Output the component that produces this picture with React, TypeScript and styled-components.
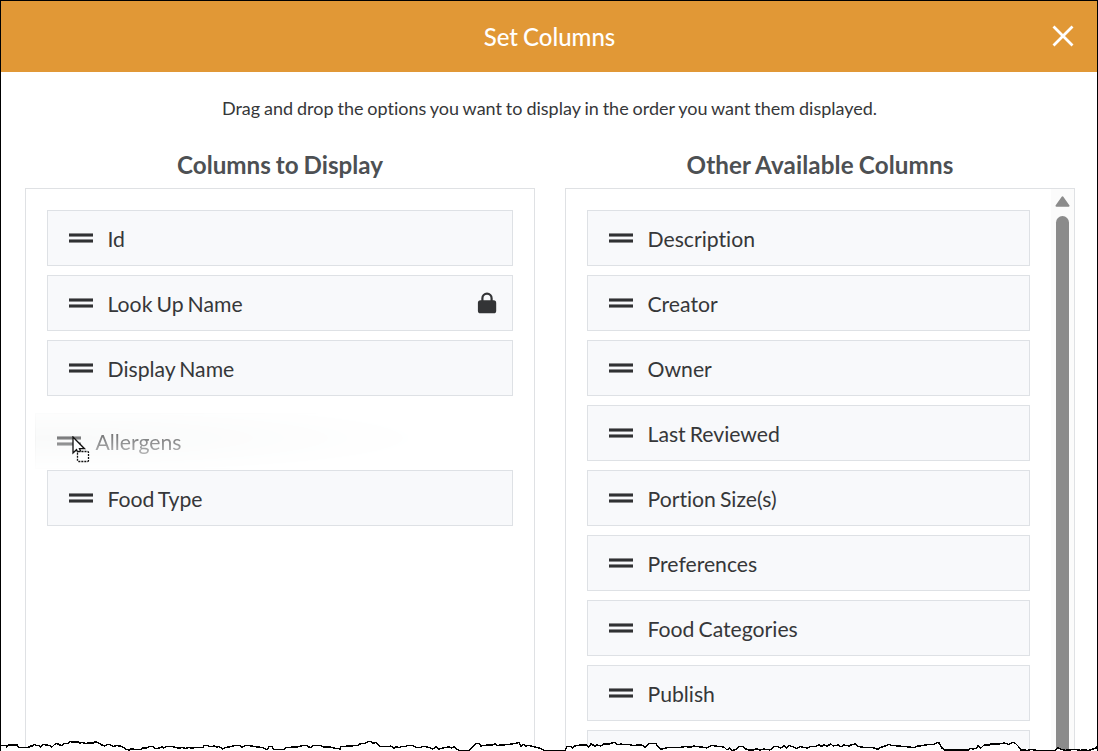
import React from 'react';
import styled, { createGlobalStyle } from 'styled-components';

const GlobalStyle = createGlobalStyle`
  *, *::before, *::after { box-sizing: border-box; }
  body { margin: 0; background: #fff; overflow: hidden; }
`;

const Dialog = styled.div`
  position: relative;
  display: flex;
  flex-direction: column;
  width: 1098px;
  height: 751px;
  overflow: hidden;
  border: 1px solid #000;
  border-bottom: 0;
  background: #fff;
  color: #363739;
  font-family: Lato, sans-serif;
  font-variant-ligatures: none;
`;

const Header = styled.header`
  display: grid;
  grid-template-columns: 68px 1fr 68px;
  align-items: center;
  flex: none;
  height: 71px;
  padding-bottom: 2px;
  background: #e19836;
  color: #fff;
`;

const Title = styled.h1`
  grid-column: 2;
  margin: 0;
  padding: 2px 0 0 1px;
  text-align: center;
  font-size: 24px;
  font-weight: 500;
  line-height: 30px;
  word-spacing: -1px;
`;

const CloseButton = styled.button`
  display: flex;
  justify-content: center;
  padding: 0;
  border: 0;
  background: none;
`;

const Hint = styled.p`
  flex: none;
  margin: 23px 0 0;
  padding-left: 1px;
  text-align: center;
  font-size: 18px;
  line-height: 26px;
  word-spacing: -0.7px;
`;

const Columns = styled.div`
  display: grid;
  grid-template-columns: 510px 510px;
  gap: 30px;
  flex: 1;
  min-height: 0;
  padding: 28px 0 0 24px;
`;

const Column = styled.section`
  display: flex;
  flex-direction: column;
  min-height: 0;
`;

const ColumnTitle = styled.h2<{ $tracking?: string }>`
  flex: none;
  margin: 0;
  height: 39px;
  text-align: center;
  color: #4d5053;
  font-size: 24.2px;
  font-weight: 700;
  line-height: 31px;
  word-spacing: -0.9px;
  letter-spacing: ${({ $tracking }) => $tracking ?? 'normal'};
`;

const Panel = styled.div`
  display: flex;
  flex: 1;
  min-height: 0;
  overflow: hidden;
  border: 1px solid #dfe1e4;
  border-bottom: 0;
`;

const List = styled.ul`
  display: flex;
  flex-direction: column;
  gap: 9px;
  flex: 1;
  margin: 0;
  padding: 21px 21px 0;
  list-style: none;
`;

const Item = styled.li`
  display: flex;
  align-items: center;
  flex: none;
  height: 56px;
  padding: 0 15px 0 21px;
  border: 1px solid #dee1e5;
  background: #f8f9fb;
`;

const Label = styled.span`
  flex: 1;
  margin-left: 14.5px;
  padding-top: 2px;
  font-size: 21.2px;
  line-height: 28px;
  word-spacing: -1.4px;
  white-space: nowrap;
`;

const Grip = styled.span`
  flex: none;
  width: 24px;
  height: 10px;
  background: linear-gradient(
    to bottom,
    #8a8a8c 0 1px, #303133 1px 3px, #8a8a8c 3px 4px,
    transparent 4px 6px,
    #8a8a8c 6px 7px, #303133 7px 9px, #8a8a8c 9px 10px
  );
`;

const DropSlot = styled.li`
  position: relative;
  flex: none;
  height: 56px;
`;

const DragGhost = styled.div`
  position: absolute;
  left: -12px;
  top: 8px;
  display: flex;
  align-items: center;
  width: 466px;
  height: 56px;
`;

const GhostFill = styled(DragGhost)`
  border: 1px solid #f3f4f4;
  background: #f9fafa;
  mask-image: radial-gradient(ellipse 375px 36px at 30px 25px, #000 0%, rgba(0, 0, 0, 0.6) 40%, rgba(0, 0, 0, 0.25) 75%, transparent 100%);
`;

const GhostContent = styled(DragGhost)`
  padding: 0 22px;
  opacity: 0.75;
  mask-image: linear-gradient(to bottom, #000 30%, rgba(0, 0, 0, 0.4) 80%);
`;

const Cursor = styled.svg`
  position: absolute;
  left: 25px;
  top: 31px;
`;

const Scrollbar = styled.div`
  display: flex;
  flex-direction: column;
  align-items: center;
  flex: none;
  width: 23px;
  padding-top: 7px;
  background: #fbfbfb;
`;

const Thumb = styled.div`
  flex: 1;
  width: 13px;
  margin-top: 9px;
  border-radius: 7px 7px 0 0;
  background: #8b8b8b;
`;

const TornEdge = styled.svg`
  position: absolute;
  left: -1px;
  bottom: 0;
`;

const EDGE =
  '0,15.5 6,15.5 7,17 9,14.8 17,14.8 19,17.5 28,17.5 31,16 33,16 34,14.5 37,15.5 39,15.5 41,17 43,14.5 50,15.5 52,17 55,14 57,13.5 60,15 62,15.7 64,13.7 68,13.7 70,11.8 78,12 80,13 82,12.3 85,13.3 93,13 96,11.5 99,13.3 102,15 105,16 107,14.4 110,14.4 113,16.3 117,15.7 120,16 123,17.4 127,19.6 129,20 131,19 137,19.4 140,19.6 143,18 147,18 149,16.7 153,16.7 155,18.4 158,18.4 162,17 164,18 166,16.4 173,16.7 178,18 183,17.7 186,18.4 188,17.7 193,18 197,17.4 203,17.4 204,15.4 208,15.4 210,16.7 213,16.7 214,16 217,17.4 218,16.4 223,19 225,17.7 230,16.7 235,15.4 239,15.4 242,17 246,15.4 250,15.7 255,16.7 262,17.4 267,19.6 269,16.7 272,16.7 274,19.4 284,19.4 286,17.4 297,17 302,15.7 307,15.4 309,17 311,17.4 313,15.4 321,15.4 323,17 330,17 334,18 340,19 341,16.4 351,16 358,15.4 360,14 366,13 368,11.5 371,11.5 373,13 376,12.7 379,16 382,16.7 389,16.7 391,16 394,18.4 396,17 400,17.5 402,16.4 406,16.4 408,15.4 412,15.4 416,17.4 420,17.4 424,16.4 429,17.4 433,19 436,17 439,19 443,18 447,17.4 449,16.7 452,18 454,16.4 456,18.4 459,20.3 469,20.3 473,17 476,13.4 479,13.4 481,16 484,15.4 488,15 493,15 495,13.7 497,15.4 501,15 507,14.7 511,14 516,13.4 519,12.4 521,16 524,14.4 526,16 529,15.4 534,16.7 539,18 544,20.3 565,20.3 567,16.7 571,16.7 573,18 575,16 580,15 587,15 589,17 591,14 595,16 597,15 601,16 604,14 609,14 612,13 615,12.5 617,14.7 621,14 625,14.7 629,14.4 633,15.7 637,15 642,15 645,17.4 649,13.4 656,13.4 658,17 661,19.4 664,18.4 669,17.4 680,17.4 685,16.7 691,17 694,16 698,16.7 702,17 707,18 711,15.4 718,16.4 724,17 727,20 730,18 732,20.3 735,20 739,16.7 743,16.7 746,19 749,20 753,20 756,18.7 760,20 764,19 770,20 774,16.4 778,16.7 781,18 784,16 787,18 789,15.5 794,17 796,18.7 800,16.7 807,18 811,16.4 815,16.7 819,15 821,16.5 824,15 827,16 831,14 833,16 838,15 841,16.7 844,15 849,16 852,14.5 856,14 858,16.4 863,17.3 872,17.3 878,19.3 881,17.3 885,16 889,14.5 892,15.5 899,16 904,16.5 914,17.5 918,16 922,15.7 927,14.7 934,14.7 937,12.5 939,13 942,18 945,20 968,20 971,18.4 973,19 976,18.5 978,16 981,18 984,15 989,15 991,14 999,14 1004,13 1009,14.5 1012,12.5 1015,13 1018,16 1021,20 1028,20.3 1031,19.5 1036,20.3 1055,20.3 1058,17.7 1062,19.5 1065,20.3 1075,19.5 1080,20.3 1084,20 1089,20.3 1093,19 1096,18 1097,16';

const LockIcon = () => (
  <svg width="20" height="22" viewBox="0 0 20 22">
    <path d="M5.4 9V6.2a4.6 4.6 0 0 1 9.2 0V9" fill="none" stroke="#333436" strokeWidth="2.2" />
    <rect x="0.9" y="8.3" width="18.3" height="13" rx="2.6" fill="#333436" />
  </svg>
);

const Row = ({ label, locked }: { label: string; locked?: boolean }) => (
  <Item>
    <Grip />
    <Label>{label}</Label>
    {locked && <LockIcon />}
  </Item>
);

const available = [
  'Description', 'Creator', 'Owner', 'Last Reviewed', 'Portion Size(s)',
  'Preferences', 'Food Categories', 'Publish', '',
];

export default function App() {
  return (
    <>
      <GlobalStyle />
      <Dialog>
        <Header>
          <Title>Set Columns</Title>
          <CloseButton aria-label="Close">
            <svg width="22" height="22" viewBox="0 0 22 22">
              <path d="M1.5 1.5 20.5 20.5M20.5 1.5 1.5 20.5" stroke="#fff" strokeWidth="2.8" />
            </svg>
          </CloseButton>
        </Header>
        <Hint>Drag and drop the options you want to display in the order you want them displayed.</Hint>
        <Columns>
          <Column>
            <ColumnTitle>Columns to Display</ColumnTitle>
            <Panel>
              <List>
                <Row label="Id" />
                <Row label="Look Up Name" locked />
                <Row label="Display Name" />
                <DropSlot>
                  <GhostFill />
                  <GhostContent>
                    <Grip />
                    <Label>Allergens</Label>
                  </GhostContent>
                  <Cursor width="20" height="28" viewBox="0 0 20 28">
                    <path d="M1 1v16l3.5-3.3 2.7 5.6 2.8-1.2-2.5-5.4h5z" fill="#fff" stroke="#111" strokeWidth="1.3" />
                    <rect x="5.5" y="15.5" width="11" height="10" rx="1" fill="#fff" stroke="#111" strokeWidth="1.3" strokeDasharray="2 1" />
                  </Cursor>
                </DropSlot>
                <Row label="Food Type" />
              </List>
            </Panel>
          </Column>
          <Column>
            <ColumnTitle $tracking="0.12px">Other Available Columns</ColumnTitle>
            <Panel>
              <List>
                {available.map((label) => <Row key={label} label={label} />)}
              </List>
              <Scrollbar>
                <svg width="15" height="11" viewBox="0 0 15 11">
                  <path d="M7.5 1.2 13.5 9.8H1.5z" fill="#8b8b8b" stroke="#8b8b8b" strokeWidth="2" strokeLinejoin="round" />
                </svg>
                <Thumb />
              </Scrollbar>
            </Panel>
          </Column>
        </Columns>
        <TornEdge width="1098" height="21" viewBox="0 0 1098 21">
          <polygon points={`${EDGE} 1098,16 1098,21 0,21`} fill="#fff" />
          <polyline points={EDGE} fill="none" stroke="#000" strokeWidth="1.4" shapeRendering="crispEdges" />
        </TornEdge>
      </Dialog>
    </>
  );
}
